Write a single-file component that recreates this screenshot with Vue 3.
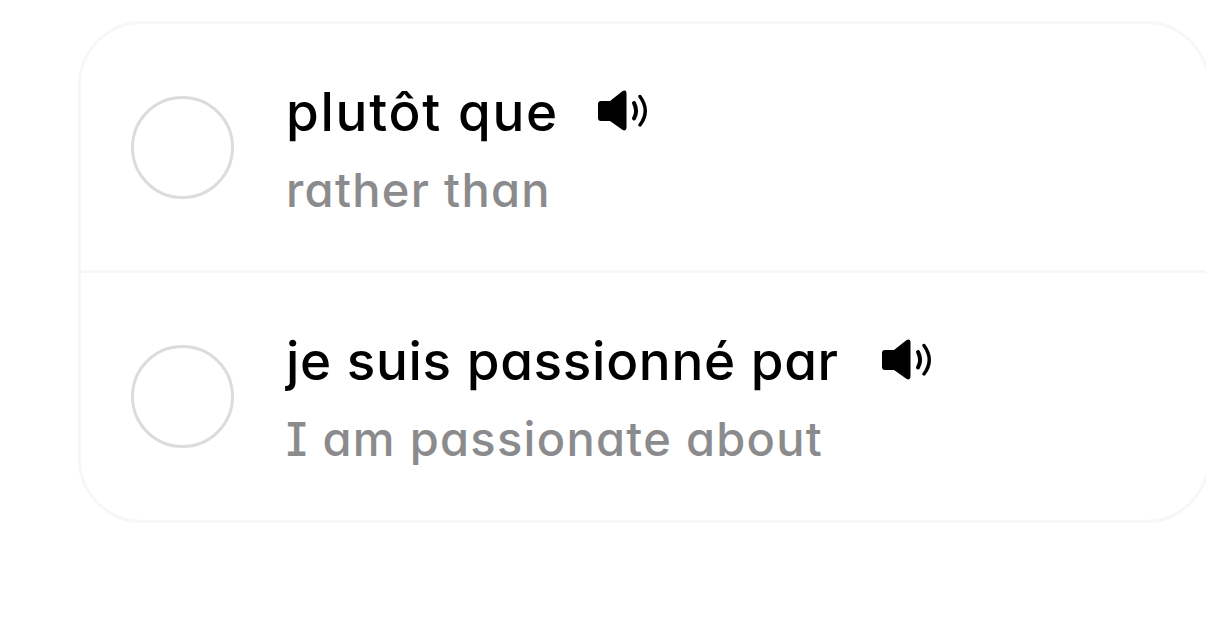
<template>
  <div class="screen">
    <ul class="phrase-list">
      <li v-for="phrase in phrases" :key="phrase.text" class="phrase-row">
        <button
          class="check"
          :class="{ checked: selected.includes(phrase.text) }"
          :aria-label="phrase.text"
          @click="toggle(phrase.text)"
        />
        <div class="phrase-body">
          <div class="phrase-head" :style="{ gap: phrase.gap + 'px' }">
            <span class="phrase-text" :style="{ letterSpacing: phrase.tracking + 'px' }">{{ phrase.text }}</span>
            <svg class="speaker" viewBox="0 0 50 42" width="50" height="42">
              <path d="M3 11h9L24 1.5q4-2.5 4.500 1.500v35q-.5 4-4.500 1.500L12 31H3q-3 0-3-3V14q0-3 3-3z" />
              <path class="wave inner" d="M36 13q4.200 8 0 15.500" />
              <path class="wave" d="M42 6.500q10.500 14.500 0 28.500" />
            </svg>
          </div>
          <div class="translation">{{ phrase.translation }}</div>
        </div>
      </li>
    </ul>
  </div>
</template>

<script setup>
import { ref } from 'vue'

const phrases = [
  { text: 'plutôt que', translation: 'rather than', tracking: 1.75, gap: 39 },
  { text: 'je suis passionné par', translation: 'I am passionate about', tracking: 0.7, gap: 43 }
]

const selected = ref([])

function toggle(text) {
  selected.value = selected.value.includes(text)
    ? selected.value.filter(t => t !== text)
    : [...selected.value, text]
}
</script>

<style>
body { background: #fff; overflow: hidden; }
</style>

<style scoped>
.screen { height: 636px; padding: 21px 0 0 78px; box-sizing: border-box; overflow: hidden; font-family: Inter, sans-serif; font-feature-settings: 'cv11', 'cv08'; white-space: nowrap; }
.phrase-list { width: 1132px; height: 502px; box-sizing: border-box; margin: 0; padding: 0; list-style: none; border: 3px solid #f7f7f7; border-radius: 64px; }
.phrase-row { display: flex; height: 246px; box-sizing: border-box; padding-left: 50px; }
.phrase-row + .phrase-row { height: 249px; border-top: 3px solid #f7f7f7; }
.check { width: 103px; height: 103px; flex: none; margin: 72px 52px 0 0; padding: 0; border: 3px solid #dcdcdc; border-radius: 50%; background: #fff; cursor: pointer; }
.check.checked { background: #dcdcdc; }
.phrase-body { padding-top: 53px; }
.phrase-head { display: flex; }
.phrase-text { font-size: 53px; line-height: 70px; font-weight: 500; color: #000; }
.translation { margin-top: 13px; font-size: 47px; line-height: 60px; font-weight: 500; letter-spacing: 1.3px; color: #8b8b8d; }
.speaker { flex: none; margin-top: 13px; }
.wave { fill: none; stroke: #000; stroke-width: 3.4; stroke-linecap: round; }
.wave.inner { stroke-width: 4; }
</style>
